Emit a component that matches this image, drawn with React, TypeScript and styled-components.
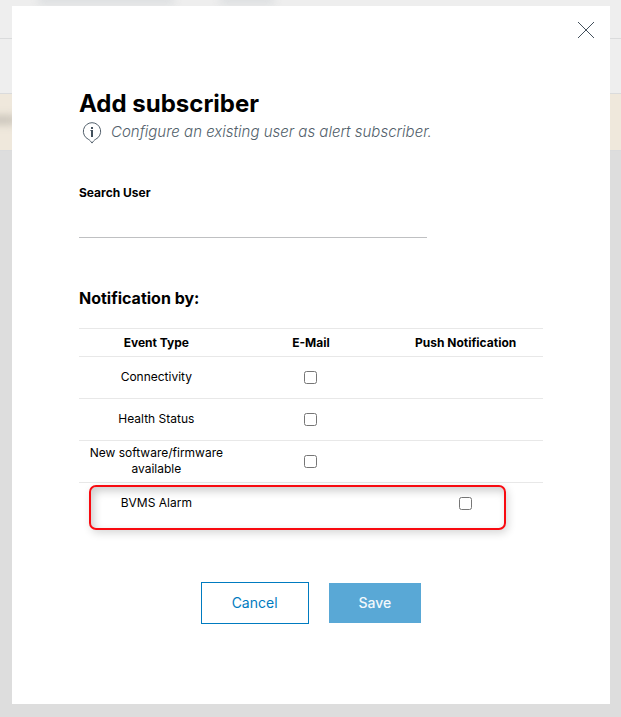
import React from "react";
import styled, { createGlobalStyle } from "styled-components";

const GlobalStyle = createGlobalStyle`
  *, *::before, *::after { box-sizing: border-box; }
  html, body, #root { height: 100%; }
  body {
    margin: 0;
    background: #dddddd;
    color: #000000;
    font-family: Inter, "Noto Sans", sans-serif;
    font-size: 12px;
    line-height: 16px;
  }
`;

const Stage = styled.div`
  position: relative;
  min-height: 100%;
  overflow: hidden;
`;

const Backdrop = styled.div`
  position: absolute;
  inset: 0;
  overflow: hidden;
`;

const Band = styled.div<{ $height: number; $color: string }>`
  position: relative;
  height: ${(p) => p.$height}px;
  background: ${(p) => p.$color};
  border-bottom: 1px solid #dadbdc;
  overflow: hidden;
`;

const Smudge = styled.span<{ $left: number; $top: number; $width: number; $color: string }>`
  position: absolute;
  left: ${(p) => p.$left}px;
  top: ${(p) => p.$top}px;
  width: ${(p) => p.$width}px;
  height: 8px;
  background: ${(p) => p.$color};
  filter: blur(4px);
`;

const Dialog = styled.div`
  position: relative;
  min-height: calc(100vh - 19px);
  margin: 6px 11px 13px 12px;
  padding: 84px 67px 80px;
  background: #ffffff;
`;

const CloseButton = styled.button`
  position: absolute;
  top: 12px;
  right: 12px;
  display: flex;
  padding: 3px;
  border: 0;
  background: none;
  cursor: pointer;
`;

const Title = styled.h1`
  margin: 0;
  font-size: 24px;
  line-height: 28px;
  font-weight: 700;
`;

const Hint = styled.p`
  display: flex;
  align-items: flex-start;
  gap: 9px;
  margin: 0;
  padding-left: 3px;
  color: #525f6b;
  font-size: 15px;
  line-height: 28px;
  font-style: italic;
  font-weight: 300;

  svg {
    flex: none;
    margin-top: 4px;
  }
`;

const Field = styled.div`
  display: flex;
  flex-direction: column;
  width: 75%;
  margin-top: 39px;
`;

const FieldLabel = styled.label`
  font-weight: 700;
`;

const SearchInput = styled.input`
  height: 37px;
  padding: 0;
  border: 0;
  border-bottom: 1px solid #bfc0c2;
  background: transparent;
  font: inherit;
  font-size: 14px;
  outline: none;
`;

const SectionTitle = styled.h2`
  margin: 50px 0 20px;
  font-size: 16px;
  line-height: 20px;
  font-weight: 700;
`;

const TableArea = styled.div`
  position: relative;
`;

const EventTable = styled.table`
  width: 100%;
  table-layout: fixed;
  border-collapse: separate;
  border-spacing: 0;
  border-top: 1px solid #e8e8e8;
  text-align: center;
`;

const HeadCell = styled.th`
  height: 28px;
  padding: 0;
  border-bottom: 1px solid #e8e8e8;
  font-weight: 700;
`;

const Cell = styled.td<{ $text?: boolean }>`
  height: 42px;
  padding: ${(p) => (p.$text ? "3px 8px 5px" : "4px 8px")};
  border-bottom: 1px solid #e8e8e8;
  vertical-align: middle;

  tr:last-child > & {
    border-bottom-color: transparent;
  }
`;

const Tick = styled.input`
  display: block;
  width: 13px;
  height: 13px;
  margin: 0 auto;
`;

const Highlight = styled.div`
  position: absolute;
  left: 10px;
  right: 37px;
  bottom: -5px;
  height: 45px;
  border: 2px solid #f80a10;
  border-radius: 7px;
  box-shadow: 2px 3px 8px rgba(0, 0, 0, 0.16), inset 3px 4px 8px rgba(0, 0, 0, 0.2);
  pointer-events: none;
`;

const Actions = styled.div`
  display: flex;
  justify-content: center;
  align-items: center;
  gap: 20px;
  margin-top: 57px;
`;

const Button = styled.button<{ $primary?: boolean }>`
  height: ${(p) => (p.$primary ? 40 : 42)}px;
  padding: 0 30px;
  border: ${(p) => (p.$primary ? "0" : "1px solid #007bc0")};
  background: ${(p) => (p.$primary ? "#59a8d6" : "#ffffff")};
  color: ${(p) => (p.$primary ? "#f2f8fc" : "#007bc0")};
  font: inherit;
  font-size: 14px;
  font-weight: ${(p) => (p.$primary ? 500 : 400)};
`;

const events = [
  { name: "Connectivity", email: true, push: false },
  { name: "Health Status", email: true, push: false },
  { name: "New software/firmware available", email: true, push: false },
  { name: "BVMS Alarm", email: false, push: true },
];

const InfoIcon = () => (
  <svg width="20" height="22" viewBox="0 0 20 22" fill="none" aria-hidden="true">
    <path
      d="M10 .7a8.700 8.700 0 0 0-3.800 16.500c1.600.8 2.600 2.200 3.800 3.900 1.200-1.700 2.200-3.100 3.800-3.900A8.700 8.700 0 0 0 10 .7z"
      stroke="#525f6b"
    />
    <path d="M9 8h2v7H9zM9 5h2v2H9z" fill="#43505c" />
    <path d="M8 8h1v1H8z" fill="#8c959d" />
  </svg>
);

export default function App() {
  return (
    <Stage>
      <GlobalStyle />
      <Backdrop aria-hidden="true">
        <Band $height={39} $color="#eeeeee">
          <Smudge $left={38} $top={-4} $width={136} $color="#d9dcde" />
          <Smudge $left={220} $top={-4} $width={54} $color="#d9dcde" />
        </Band>
        <Band $height={55} $color="#eeeeee" />
        <Band $height={57} $color="#efe8dc">
          <Smudge $left={-10} $top={22} $width={26} $color="#c4bfb5" />
        </Band>
      </Backdrop>
      <Dialog role="dialog" aria-labelledby="dialog-title">
        <CloseButton type="button" aria-label="Close">
          <svg width="18" height="18" viewBox="0 0 18 18" fill="none">
            <path d="M1 1l16 16M17 1L1 17" stroke="#43505c" />
          </svg>
        </CloseButton>
        <Title id="dialog-title">Add subscriber</Title>
        <Hint>
          <InfoIcon />
          Configure an existing user as alert subscriber.
        </Hint>
        <Field>
          <FieldLabel htmlFor="search-user">Search User</FieldLabel>
          <SearchInput id="search-user" type="text" />
        </Field>
        <SectionTitle>Notification by:</SectionTitle>
        <TableArea>
          <EventTable>
            <thead>
              <tr>
                <HeadCell scope="col">Event Type</HeadCell>
                <HeadCell scope="col">E-Mail</HeadCell>
                <HeadCell scope="col">Push Notification</HeadCell>
              </tr>
            </thead>
            <tbody>
              {events.map((event) => (
                <tr key={event.name}>
                  <Cell $text>{event.name}</Cell>
                  <Cell>
                    {event.email && <Tick type="checkbox" aria-label={`${event.name}: E-Mail`} />}
                  </Cell>
                  <Cell>
                    {event.push && <Tick type="checkbox" aria-label={`${event.name}: Push Notification`} />}
                  </Cell>
                </tr>
              ))}
            </tbody>
          </EventTable>
          <Highlight />
        </TableArea>
        <Actions>
          <Button type="button">Cancel</Button>
          <Button type="button" $primary>
            Save
          </Button>
        </Actions>
      </Dialog>
    </Stage>
  );
}
